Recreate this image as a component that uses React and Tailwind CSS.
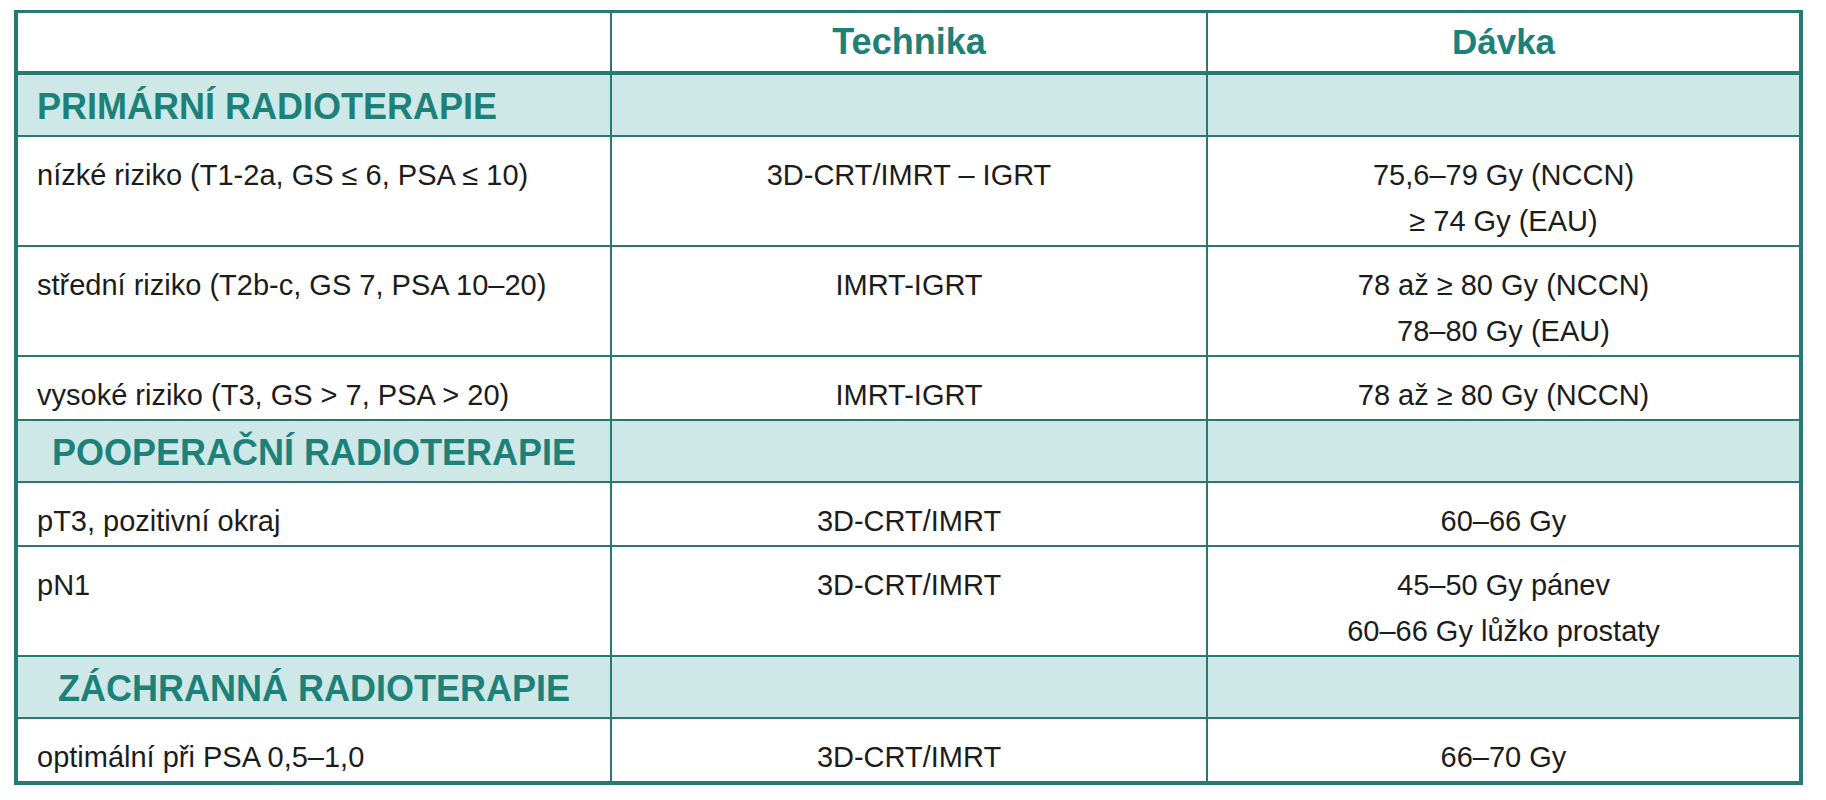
import React from 'react';

const rows = [
  { type: 'section', label: 'PRIMÁRNÍ RADIOTERAPIE', align: 'left' },
  { type: 'row', label: 'nízké riziko (T1-2a, GS ≤ 6, PSA ≤ 10)', technika: '3D-CRT/IMRT – IGRT', davka: ['75,6–79 Gy (NCCN)', '≥ 74 Gy (EAU)'] },
  { type: 'row', label: 'střední riziko (T2b-c, GS 7, PSA 10–20)', technika: 'IMRT-IGRT', davka: ['78 až ≥ 80 Gy (NCCN)', '78–80 Gy (EAU)'] },
  { type: 'row', label: 'vysoké riziko (T3, GS > 7, PSA > 20)', technika: 'IMRT-IGRT', davka: ['78 až ≥ 80 Gy (NCCN)'] },
  { type: 'section', label: 'POOPERAČNÍ RADIOTERAPIE', align: 'center' },
  { type: 'row', label: 'pT3, pozitivní okraj', technika: '3D-CRT/IMRT', davka: ['60–66 Gy'] },
  { type: 'row', label: 'pN1', technika: '3D-CRT/IMRT', davka: ['45–50 Gy pánev', '60–66 Gy lůžko prostaty'] },
  { type: 'section', label: 'ZÁCHRANNÁ RADIOTERAPIE', align: 'center' },
  { type: 'row', label: 'optimální při PSA 0,5–1,0', technika: '3D-CRT/IMRT', davka: ['66–70 Gy'] },
];

const grid = 'grid grid-cols-[594px_596px_591px]';

const SectionRow = ({ label, align, last }) => (
  <div className={`${grid} h-[62px] bg-[#cde8e7] ${last ? '' : 'border-b-2 border-[#267a73]'}`}>
    <div
      className={`flex items-center pt-[4px] border-r-2 border-[#267a73] text-[36px] font-bold text-[#1d8179] leading-none ${
        align === 'left' ? 'pl-[19px]' : 'justify-center'
      }`}
    >
      {label}
    </div>
    <div className="border-r-2 border-[#267a73]" />
    <div />
  </div>
);

const DataRow = ({ label, technika, davka, last }) => (
  <div className={`${grid} text-[29px] leading-[46px] text-[#1c1c1c] ${last ? '' : 'border-b-2 border-[#267a73]'}`}>
    <div className="border-r-2 border-[#267a73] pl-[19px] pt-[15px] pb-[1px]">{label}</div>
    <div className="border-r-2 border-[#267a73] text-center pt-[15px] pb-[1px]">{technika}</div>
    <div className="text-center pt-[15px] pb-[1px]">
      {davka.map((d, i) => (
        <div key={i}>{d}</div>
      ))}
    </div>
  </div>
);

export default function App() {
  return (
    <div className="min-h-screen bg-white pt-[10px] pl-[14px] font-['Liberation_Sans',Arial,sans-serif]">
      <div className="w-[1789px] border-4 border-t-[3px] border-[#267a73]">
        {/* Header */}
        <div className={`${grid} h-[62px] border-b-4 border-[#267a73]`}>
          <div className="border-r-2 border-[#267a73]" />
          <div className="flex items-center justify-center border-r-2 border-[#267a73] text-[36px] font-bold text-[#1d8179]">
            Technika
          </div>
          <div className="flex items-center justify-center text-[35px] font-bold text-[#1d8179]">Dávka</div>
        </div>

        {rows.map((r, i) =>
          r.type === 'section' ? (
            <SectionRow key={i} label={r.label} align={r.align} last={i === rows.length - 1} />
          ) : (
            <DataRow key={i} {...r} last={i === rows.length - 1} />
          )
        )}
      </div>
    </div>
  );
}
